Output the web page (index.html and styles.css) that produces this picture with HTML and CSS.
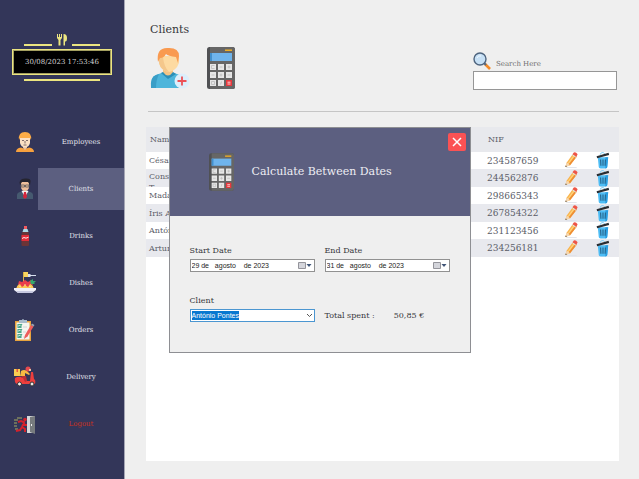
FILE: index.html
```html
<!DOCTYPE html>
<html lang="en">
<head>
<meta charset="utf-8">
<title>Clients</title>
<link rel="stylesheet" href="styles.css">
</head>
<body>
<svg class="defs" aria-hidden="true">
  <symbol id="calc" viewBox="0 0 28 42">
    <rect width="28" height="42" rx="2.5" fill="#505154"/><path d="M3 0h22.500a2.500 2.500 0 0 1 2.500 2.500v37a2.500 2.500 0 0 1-2.500 2.500H3z" fill="#666"/>
    <path d="M18 2.500h7v1.500h-7z" fill="#f0ae24"/><path d="M3 6h22v8H3z" fill="#6fb4ec"/><path d="M3 6h2v8H3z" fill="#4390cd"/>
    <g fill="#e6e6e6"><path d="M3 17h6v6H3zM11 17h6v6h-6zM19 17h6v6h-6zM3 25h6v6H3zM11 25h6v6h-6zM19 25h6v6h-6zM3 33h6v6H3zM11 33h6v6h-6z"/></g>
    <path d="M19 33h6v6h-6z" fill="#e8383d"/>
    <path d="M7.500 18.500h-3v3h3M12.500 20h3M20.500 20h3M22 18.500v3M4.500 28h3M12.500 28h3M14 26.500v3M20.500 28h3M4.500 34.500h3v3h-3zM13.500 37.500l1-3" fill="none" stroke="#bbb" stroke-width=".8"/>
    <path d="M20.500 35.200h3M20.500 37h3" stroke="#fff" stroke-width=".8"/>
  </symbol>
  <symbol id="pencil" viewBox="0 0 14 18">
    <path d="M2 16.500h11" stroke="#dfe2ea"/>
    <path d="M1 16l1.500-5L9 2l4 3-7 9z" fill="#f9b34c"/><path d="M4 12.500L10.500 3.500" stroke="#ffd27a" stroke-width="1.500"/><path d="M6 14l7-9-1.200-1L4.500 13z" fill="#ee8d35"/>
    <path d="M1 16l1.500-5L6 14z" fill="#f5d6b0"/><path d="M1 16l.5-1.800 1.300 1z" fill="#444"/>
    <path d="M8.500 2.500l1.500-2q2-1 4 2l-1.300 2.500z" fill="#ee5547"/><path d="M8.300 2.800l4.200 3" stroke="#dce4ee" stroke-width="1"/>
  </symbol>
  <symbol id="trash" viewBox="0 0 14 18">
    <path d="M4 3q0-2.500 3-2.500l2 1.500" fill="none" stroke="#80cdf3"/>
    <path d="M1.500 5.500h11L11.500 16q0 1.500-2 1.500h-5q-2 0-2-1.500z" fill="#4dbcf4"/><path d="M9.500 5.500h3L11.500 16q0 1.500-2 1.500z" fill="#299de0"/>
    <path d="M4.500 8l.3 6.500M7 8v6.500M9.500 8l-.3 6.500" stroke="#245c80" stroke-width="1.100"/><path d="M.5 5.600L13.200 2" stroke="#292d32" stroke-width="2.300"/>
  </symbol>
</svg>

<div class="app">
  <aside class="sidebar">
    <div class="clock">
      <div class="clock-top">
        <i></i>
        <svg width="10" height="12" viewBox="0 0 10 12" aria-hidden="true"><path d="M0 0h1v3h1V0h1v3h1V0h1v4L3.500 6v5.500h-2V6L0 4zM6.500 0Q10 0 10 4t-2 3.500v4H6.500z" fill="#ece580"/></svg>
        <i></i>
      </div>
      <time>30/08/2023 17:53:46</time>
      <i class="clock-base"></i>
    </div>
    <nav>
      <a href="#"><svg viewBox="0 0 22 22"><path d="M2 21q0-4 5-4.500l4 1.500 4-1.500q5 .5 5 4.500z" fill="#f7a13e"/><path d="M9 13h4v4l-2 2-2-2z" fill="#e9c09e"/><path d="M6 6h10v6q-1 4-5 4.500-4-.5-5-4.500z" fill="#fbe0c3"/><path d="M5 9Q4 1 11 1t6 8l-1-2H6z" fill="#fcac46"/><path d="M8 9.500h2M12 9.500h2M11 10v2.500M9.500 14h3" stroke="#635054" stroke-width=".8"/></svg><span>Employees</span></a>
      <a href="#" class="current"><svg viewBox="0 0 22 22"><path d="M3 21v-4q0-3 5-3.500h6q5 .5 5 3.500v4z" fill="#465a70"/><path d="M7.500 13l3.500 6 3.500-6-3.500-1z" fill="#f2f3f7"/><path d="M10 14h2l1 5-2 2-2-2z" fill="#d7243b"/><path d="M7 4h8v6q-1 3-4 3.500-3-.5-4-3.500z" fill="#eebf9b"/><path d="M6 7Q4 1 11 .5q6-.5 5.500 3L16 7l-2-3H8z" fill="#25242f"/><path d="M7 7h3.500v2H7zM11.500 7H15v2h-3.500z" fill="none" stroke="#555" stroke-width=".8"/></svg><span>Clients</span></a>
      <a href="#"><svg viewBox="0 0 22 22"><path d="M10 1h3v3l2 5v11q0 1-1 1H8.500q-1 0-1-1V9L10 4z" fill="#6a3437"/><path d="M10 1h3v3h-3z" fill="#ef5a60"/><path d="M9.500 4h4l1 3h-6z" fill="#a9dbe5"/><path d="M7.500 10H15v6H7.500z" fill="#e22c38"/><path d="M8 13.500l2-1 2 .7 2.500-1" fill="none" stroke="#fff" stroke-width=".9"/></svg><span>Drinks</span></a>
      <a href="#"><svg viewBox="0 0 22 22"><path d="M9 0h1v10H9z" fill="#d8b348"/><path d="M10 0h4v5h-4z" fill="#f9d660"/><path d="M14 2h2l1 1h5v1h-5l-1 1h-2z" fill="#d9e0ef"/><path d="M2 17q1-6 9-7 8 1 9 7z" fill="#fac552"/><path d="M4 13l1-4 3 1 3-2 3 2 3-2 2 5-3-1-2 3-3-2-3 2-2-3z" fill="#e93d4b"/><path d="M16 9l3-2v2h3l-2 2 1 1h-4z" fill="#36a86c"/><path d="M0 16h22v2l-4 3H4l-4-3z" fill="#f0f0f8"/><path d="M2 19h18l-2 2H4z" fill="#c6c8df"/><path d="M5 14l2 1M10 13h2M15 14l2 1" stroke="#ffe48d"/></svg><span>Dishes</span></a>
      <a href="#"><svg viewBox="0 0 22 22"><path d="M1 2h16v20H1z" fill="#e7a33d"/><path d="M2.500 3.500h13v17h-13z" fill="#f4f5f0"/><path d="M5 1h3q1-2 2 0h3v3H5z" fill="#a9bccb"/><g fill="none" stroke="#4da98b" stroke-width="1.100"><path d="M4 5.500h3v3H4zM4 10.500h3v3H4zM4 15.500h3v3H4zM5 7l1 1 2-3M5 12l1 1 2-3M5 17l1 1 2-3"/></g><path d="M9 8h4M9 13h3M9 18h2" stroke="#d3d6d6"/><path d="M10 20l1-4 6-10 2.500 1.500-6 10z" fill="#ee5d5b"/><path d="M17 6l1-1.500 2.500 1.500-1 1.500z" fill="#9aa4b3"/></svg><span>Orders</span></a>
      <a href="#"><svg viewBox="0 0 22 22"><path d="M0 3h6v7H0z" fill="#f8cf51"/><path d="M2.500 3h1.500v3H2.500z" fill="#e9583e"/><path d="M7 5q3-2 6 0l3 3-1 1-4-2v3H6z" fill="#f7b943"/><circle cx="14" cy="3" r="2.500" fill="#e54a4e"/><path d="M15 3h2v2h-2z" fill="#eac4a3"/><path d="M1 12q2-2 10-1l2 4h3l1-9h2l1 7q2 1 1 5H3q-3-1-2-6z" fill="#ed3f3d"/><path d="M8 10h4l1 5-2 1-2-4H7z" fill="#ba3037"/><circle cx="5.500" cy="18" r="2" fill="#ede9e9" stroke="#333"/><circle cx="18" cy="18" r="2" fill="#ede9e9" stroke="#333"/></svg><span>Delivery</span></a>
      <a href="#" class="logout"><svg viewBox="0 0 22 22"><path d="M13 3h8v17h-8z" fill="#d6d8da"/><path d="M16 4l5-1v18l-5-2z" fill="#777b7e"/><path d="M17.500 11v2" stroke="#eee"/><path d="M0 7h4M3 5h5M0 10h3M0 13h3M1 16h3" stroke="#b3b963" stroke-width=".9"/><circle cx="11" cy="6.500" r="1.800" fill="#d2222c"/><path d="M4 9l3-1 3 1-2 5 3 2v3M8 14l-2 3-4 1M9 9l2 3h2" fill="none" stroke="#d2222c" stroke-width="2"/></svg><span>Logout</span></a>
    </nav>
  </aside>

  <main>
    <h1>Clients</h1>
    <div class="toolbar">
      <button type="button" class="tool" aria-label="Add client"><svg width="40" height="42" viewBox="0 0 40 42"><path d="M1 41q-1-11 5-13l8-3h7l9 3q5 2 5 13z" fill="#4db5db"/><path d="M1 41q-1-11 5-13l3-1q-3 6-3 14z" fill="#399ec7"/><path d="M13 20h10v6q-5 7-10 0z" fill="#f2c486"/><path d="M11 26l2-1q5 7 10 0l3 2-8 5z" fill="#2b8fb8"/><path d="M9 9h20v7q-3 8-10 9-8-1-10-9z" fill="#fddaa1"/><path d="M9 10h4q1 10 6 15-8-1-10-9z" fill="#f4c78b"/><path d="M8 15Q6 1 17 1q12-1 12 8l-1 7-2-6q-8-1-10-3-2 4-6 4z" fill="#f99a50"/><circle cx="32" cy="34" r="7.500" fill="#dceefb"/><path d="M32 29.500v9M27.500 34h9" stroke="#ec5257" stroke-width="1.800"/></svg></button>
      <button type="button" class="tool" aria-label="Calculate"><svg width="28" height="42"><use href="#calc"/></svg></button>
      <div class="search">
        <label for="q"><svg width="18" height="18" viewBox="0 0 18 18"><path d="M12 12l5 5" stroke="#f58a26" stroke-width="2.600"/><path d="M11 11l2 2" stroke="#526780" stroke-width="2"/><circle cx="7" cy="7" r="6" fill="#c7e0f5" stroke="#4e647e" stroke-width="1.400"/><path d="M4 6q1-3 4-2" fill="none" stroke="#eff8ff"/></svg><span>Search Here</span></label>
        <input id="q" type="text">
      </div>
    </div>
    <hr>
    <section class="list">
      <table>
        <thead><tr><th class="name">Name</th><th class="nif">NIF</th><th class="edit"></th><th class="delete"></th></tr></thead>
        <tbody>
          <tr><td><div class="cell">César</div></td><td class="nif">234587659</td><td><button aria-label="Edit"><svg><use href="#pencil"/></svg></button></td><td><button aria-label="Delete"><svg><use href="#trash"/></svg></button></td></tr>
          <tr><td><div class="cell wrap">Cons<br>T</div></td><td class="nif">244562876</td><td><button aria-label="Edit"><svg><use href="#pencil"/></svg></button></td><td><button aria-label="Delete"><svg><use href="#trash"/></svg></button></td></tr>
          <tr><td><div class="cell">Madalena</div></td><td class="nif">298665343</td><td><button aria-label="Edit"><svg><use href="#pencil"/></svg></button></td><td><button aria-label="Delete"><svg><use href="#trash"/></svg></button></td></tr>
          <tr><td><div class="cell">Íris A</div></td><td class="nif">267854322</td><td><button aria-label="Edit"><svg><use href="#pencil"/></svg></button></td><td><button aria-label="Delete"><svg><use href="#trash"/></svg></button></td></tr>
          <tr><td><div class="cell">António</div></td><td class="nif">231123456</td><td><button aria-label="Edit"><svg><use href="#pencil"/></svg></button></td><td><button aria-label="Delete"><svg><use href="#trash"/></svg></button></td></tr>
          <tr><td><div class="cell">Artur</div></td><td class="nif">234256181</td><td><button aria-label="Edit"><svg><use href="#pencil"/></svg></button></td><td><button aria-label="Delete"><svg><use href="#trash"/></svg></button></td></tr>
        </tbody>
      </table>
    </section>
  </main>
</div>

<div class="overlay">
  <div class="dialog" role="dialog" aria-labelledby="dlg-title">
    <header>
      <svg width="25" height="38" aria-hidden="true"><use href="#calc"/></svg>
      <h2 id="dlg-title">Calculate Between Dates</h2>
      <button type="button" class="close" aria-label="Close"><svg width="18" height="18" viewBox="0 0 18 18"><path d="M5 5l8 8M13 5l-8 8" stroke="#fff" stroke-width="1.500"/></svg></button>
    </header>
    <form>
      <div class="field">
        <label for="start">Start Date</label>
        <div class="date"><input id="start" type="text" value="29 de   agosto    de 2023"><button type="button" aria-label="Open start calendar"><svg width="14" height="9" viewBox="0 0 14 9"><path d="M.5 1.500h7v6h-7z" fill="#d4d5db" stroke="#94949b"/><path d="M8.500 3h5L11 6z" fill="#405577"/></svg></button></div>
      </div>
      <div class="field">
        <label for="end">End Date</label>
        <div class="date"><input id="end" type="text" value="31 de   agosto    de 2023"><button type="button" aria-label="Open end calendar"><svg width="14" height="9" viewBox="0 0 14 9"><path d="M.5 1.500h7v6h-7z" fill="#d4d5db" stroke="#94949b"/><path d="M8.500 3h5L11 6z" fill="#405577"/></svg></button></div>
      </div>
      <div class="field">
        <label for="client">Client</label>
        <div class="combo"><select id="client"><option>António Pontes</option></select><svg width="7" height="5" viewBox="0 0 7 5"><path d="M1 1l2.500 2.500L6 1" fill="none" stroke="#555"/></svg></div>
      </div>
      <p class="total"><span>Total spent :</span><output>50,85 €</output></p>
    </form>
  </div>
</div>
</body>
</html>
```

FILE: styles.css
```css
* { box-sizing: border-box; }

body {
  margin: 0;
  background: #efefef;
  color: #35363a;
  font: 8px/12px "DejaVu Serif", serif;
}

h1, h2, p { margin: 0; font-weight: normal; }
button { padding: 0; border: 0; background: none; display: block; }
svg { display: block; }
.defs { position: absolute; width: 0; height: 0; }

.app { display: flex; min-height: 100vh; }

/* Sidebar */
.sidebar {
  flex: 0 0 125px;
  padding-top: 34px;
  background: #333659;
  border-right: 1px solid #a5a6b5;
}
.clock { margin: 0 12px; }
.clock i { display: block; height: 2px; background: #ece580; }
.clock-top { display: flex; align-items: flex-end; gap: 5px; padding: 0 12px; }
.clock-top i { flex: 1; }
.clock time {
  display: block;
  margin: 3px 0 4px;
  padding: 6px 0;
  border: 1px solid #ece580;
  outline: 1px solid #a39f60;
  outline-offset: -2px;
  background: #000;
  color: #d2d2d2;
  font-size: 7px;
  text-align: center;
}
.clock .clock-base { margin: 0 12px; }

nav { display: flex; flex-direction: column; gap: 6px; margin-top: 40px; }
nav a {
  display: flex;
  align-items: center;
  height: 41px;
  color: #e2e3ec;
  font-size: 7px;
  text-decoration: none;
}
nav svg { flex: none; width: 22px; height: 22px; margin: 0 2px 0 14px; }
nav span { flex: 1; line-height: 42px; text-align: center; }
nav .current span { background: #5c5f80; }
nav .logout { color: #c8321f; }

/* Main area */
main { flex: 1; display: flex; flex-direction: column; padding: 22px 20px 18px 21px; }
h1 { padding-left: 4px; font-size: 11px; line-height: 16px; }
.toolbar { display: flex; align-items: flex-start; padding: 9px 2px 0 4px; gap: 17px; }
.search { width: 144px; margin: 5px 0 0 auto; }
.search label { display: flex; align-items: center; gap: 5px; color: #707070; font-size: 7px; }
.search label span { padding-top: 6px; }
.search input {
  display: block;
  width: 100%;
  height: 19px;
  margin-top: 1px;
  border: 1px solid #969696;
  background: #fff;
}
hr { width: calc(100% - 2px); height: 1px; margin: 21px 0 15px auto; border: 0; background: #c5c5c5; }

.list { flex: 1; background: #fff; }
table { width: 100%; border-collapse: collapse; table-layout: fixed; color: #5b5d68; }
th, td { padding: 0; font-weight: normal; text-align: left; }
th { height: 25px; background: #e8e9ed; }
th.name { padding-left: 4px; }
th.nif { width: 77px; padding-left: 1px; }
th.edit { width: 32px; }
th.delete { width: 23px; }
td { height: 17px; }
tr:nth-child(even) td { height: 18px; background: #e8e9ee; }
td.nif { font-size: 9px; }
.cell { height: 17px; padding-left: 3px; overflow: hidden; line-height: 17px; }
.cell.wrap { padding-top: 1px; line-height: 11px; }
td svg { width: 14px; height: 17px; }

/* Dialog */
.overlay { position: fixed; inset: 0; display: grid; place-items: center; }
.dialog { width: 302px; border: 1px solid #8e8f93; background: #efefef; }
.dialog header {
  display: flex;
  align-items: center;
  height: 88px;
  padding: 0 4px 0 39px;
  background: #5c5f80;
}
h2 { flex: 1; margin-left: 18px; color: #eeeef4; font-size: 11px; line-height: 16px; }
.close { align-self: flex-start; margin-top: 5px; border-radius: 2px; background: #fb5254; }
form {
  display: grid;
  grid-template-columns: 1fr 1fr;
  gap: 23px 10px;
  padding: 29px 20px 30px;
}
.field { display: grid; gap: 2px; }
.date, .combo {
  display: flex;
  align-items: center;
  height: 13px;
  border: 1px solid #919191;
  background: #fff;
}
.date { padding-right: 2px; }
.date input, .combo select {
  flex: 1;
  min-width: 0;
  height: 11px;
  padding: 0 1px;
  border: 0;
  background: none;
  color: #222;
  font: 7px/11px "Liberation Sans", sans-serif;
}
.combo { border-color: #4b96d1; padding-right: 1px; }
.combo select {
  appearance: none;
  background: linear-gradient(#0878d0, #0878d0) 1px 1px / 47px 9px no-repeat;
  color: #fff;
}
.total { display: flex; align-self: end; gap: 19px; }
```
